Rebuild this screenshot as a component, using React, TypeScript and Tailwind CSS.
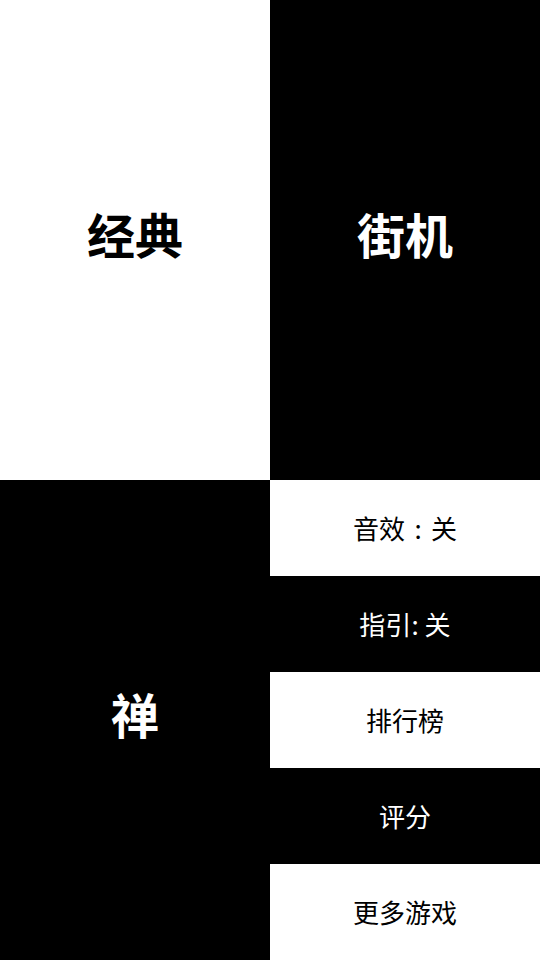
const MENU = [
  { label: "音效", value: "关", sep: "wide", dark: false },
  { label: "指引", value: "关", sep: "tight", dark: true },
  { label: "排行榜", dark: false },
  { label: "评分", dark: true },
  { label: "更多游戏", dark: false },
];

const font = { fontFamily: '"Noto Sans CJK SC", "Noto Sans", sans-serif' };

export default function App() {
  return (
    <div className="grid grid-cols-2 grid-rows-2 w-[540px] h-[960px] overflow-hidden" style={font}>
      <div className="bg-white text-black flex items-center justify-center pb-[14px]">
        <span className="text-[48px] font-bold leading-none">经典</span>
      </div>
      <div className="bg-black text-white flex items-center justify-center pb-[14px]">
        <span className="text-[48px] font-bold leading-none">街机</span>
      </div>
      <div className="bg-black text-white flex items-center justify-center pb-[14px]">
        <span className="text-[48px] font-bold leading-none">禅</span>
      </div>
      <div className="flex flex-col">
        {MENU.map((item) => (
          <div
            key={item.label}
            className={`flex-1 flex items-center justify-center ${item.dark ? "bg-black text-white" : "bg-white text-black"}`}
          >
            <span className="text-[26px] leading-none flex items-center">
              {item.label}
              {item.sep === "wide" && <span className="inline-block w-[26px] text-center">:</span>}
              {item.sep === "tight" && <span className="pr-[6px]">:</span>}
              {item.value}
            </span>
          </div>
        ))}
      </div>
    </div>
  );
}
